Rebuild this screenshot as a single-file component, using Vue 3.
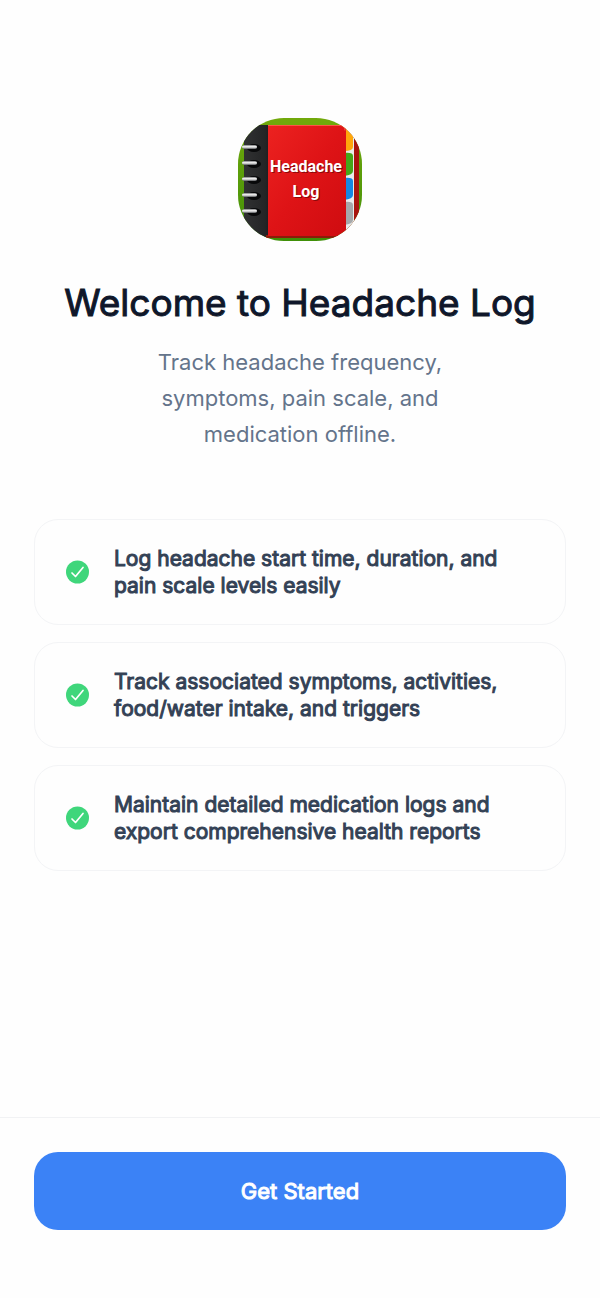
<template>
  <div class="welcome">
    <main class="content">
      <svg class="app-icon" viewBox="0 0 124 124" role="img" aria-label="Headache Log">
        <defs>
          <clipPath id="icon-shape">
            <rect width="124" height="123" rx="46" />
          </clipPath>
          <linearGradient id="grass" x1="0" y1="0" x2="0" y2="1">
            <stop offset="0" stop-color="#72a90b" />
            <stop offset="1" stop-color="#3f8f08" />
          </linearGradient>
          <linearGradient id="cover" x1="0" y1="0" x2="1" y2="1">
            <stop offset="0" stop-color="#ec2220" />
            <stop offset="0.5" stop-color="#de1316" />
            <stop offset="1" stop-color="#cf0c10" />
          </linearGradient>
          <linearGradient id="ring" x1="0" y1="0" x2="0" y2="1">
            <stop offset="0" stop-color="#77787a" />
            <stop offset="0.45" stop-color="#ffffff" />
            <stop offset="1" stop-color="#55575a" />
          </linearGradient>
          <linearGradient id="spine" x1="0" y1="0" x2="1" y2="0">
            <stop offset="0" stop-color="#303132" />
            <stop offset="0.7" stop-color="#242526" />
            <stop offset="1" stop-color="#151617" />
          </linearGradient>
        </defs>
        <g clip-path="url(#icon-shape)">
          <rect width="124" height="124" fill="url(#grass)" />
          <rect x="107" y="8" width="14" height="112" fill="#a8130e" />
          <rect x="106" y="6" width="10" height="112" fill="#e8eceb" />
          <rect x="6" y="7" width="30" height="112" rx="3" fill="url(#spine)" />
          <path d="M28 117h82v3H28z" fill="#8c1c0a" />
          <path d="M106 7h4q5 0 5 5v17q0 4-9 4z" fill="#ffa60b" />
          <path d="M106 35q9-1 9 3v15q0 4-9 5z" fill="#45a719" />
          <path d="M106 60q9-1 9 3v14q0 4-9 5z" fill="#1687e2" />
          <path d="M106 84q9-1 9 3v15q0 4-9 5z" fill="#a5a8aa" />
          <path d="M30 7h73q5 0 5 5v101q0 5-5 5H30z" fill="url(#cover)" />
          <path d="M30 7.500h72q5 0 5 5" fill="none" stroke="#ff5347" />
          <g v-for="y in ringRows" :key="y">
            <ellipse cx="16" :cy="y + 1" rx="7" ry="4" fill="#08090a" />
            <rect x="4" :y="y - 2" width="15" height="4" rx="2" fill="url(#ring)" />
          </g>
          <g class="icon-label">
            <text x="69" y="55" class="label-shadow">Headache</text>
            <text x="69" y="80" class="label-shadow">Log</text>
            <text x="68" y="54">Headache</text>
            <text x="68" y="79">Log</text>
          </g>
        </g>
      </svg>

      <h1 class="title">Welcome to Headache Log</h1>
      <p class="subtitle">Track headache frequency, symptoms, pain scale, and medication offline.</p>

      <ul class="features">
        <li v-for="feature in features" :key="feature" class="feature">
          <svg class="check" viewBox="0 0 24 24" aria-hidden="true">
            <circle cx="11.500" cy="12" r="11.500" fill="#3fd67b" />
            <path d="M6 13l3.500 3.500L17 7.500" fill="none" stroke="#fff" stroke-width="1.700" stroke-linecap="round" stroke-linejoin="round" />
          </svg>
          <span class="feature-text">{{ feature }}</span>
        </li>
      </ul>
    </main>

    <footer class="footer">
      <button type="button" class="start-button">Get Started</button>
    </footer>
  </div>
</template>

<script setup>
const features = [
  'Log headache start time, duration, and pain scale levels easily',
  'Track associated symptoms, activities, food/water intake, and triggers',
  'Maintain detailed medication logs and export comprehensive health reports'
];

const ringRows = [29, 45, 61, 77, 93];
</script>

<style>
body {
  margin: 0;
  background: #fefefe;
}
</style>

<style scoped>
.welcome {
  display: flex;
  flex-direction: column;
  min-height: 100vh;
  font-family: Inter, "Liberation Sans", sans-serif;
}

.content {
  flex: 1;
  display: flex;
  flex-direction: column;
  align-items: center;
  padding: 118px 34px 34px;
}

.app-icon {
  width: 124px;
  height: 124px;
}

.icon-label {
  font-family: Roboto, "Open Sans", sans-serif;
  font-size: 16px;
  font-weight: 700;
  text-anchor: middle;
  fill: #fff;
}

.label-shadow {
  fill: #8d090b;
}

.title {
  margin: 35px 0 0;
  font-size: 37px;
  line-height: 52px;
  font-weight: 400;
  -webkit-text-stroke: 1px currentColor;
  text-align: center;
  color: #0f172a;
}

.subtitle {
  max-width: 320px;
  margin: 15px 0 0;
  font-size: 22px;
  line-height: 36px;
  text-align: center;
  color: #64748b;
}

.features {
  display: flex;
  flex-direction: column;
  gap: 17px;
  width: 100%;
  margin: 67px 0 0;
  padding: 0;
  list-style: none;
}

.feature {
  display: flex;
  align-items: center;
  gap: 24px;
  padding: 25px 31px;
  border: 1px solid #f3f4f6;
  border-radius: 24px;
}

.check {
  flex: none;
  width: 24px;
  height: 24px;
}

.feature-text {
  font-size: 21px;
  line-height: 27px;
  font-weight: 400;
  -webkit-text-stroke: 1px currentColor;
  color: #334155;
}

.footer {
  padding: 34px 34px 68px;
  border-top: 1px solid #f1f2f4;
}

.start-button {
  display: block;
  width: 100%;
  height: 78px;
  border: 0;
  border-radius: 24px;
  background: #3b82f6;
  color: #fff;
  font-family: inherit;
  font-size: 22px;
  font-weight: 400;
  -webkit-text-stroke: 1px currentColor;
  cursor: pointer;
}
</style>
